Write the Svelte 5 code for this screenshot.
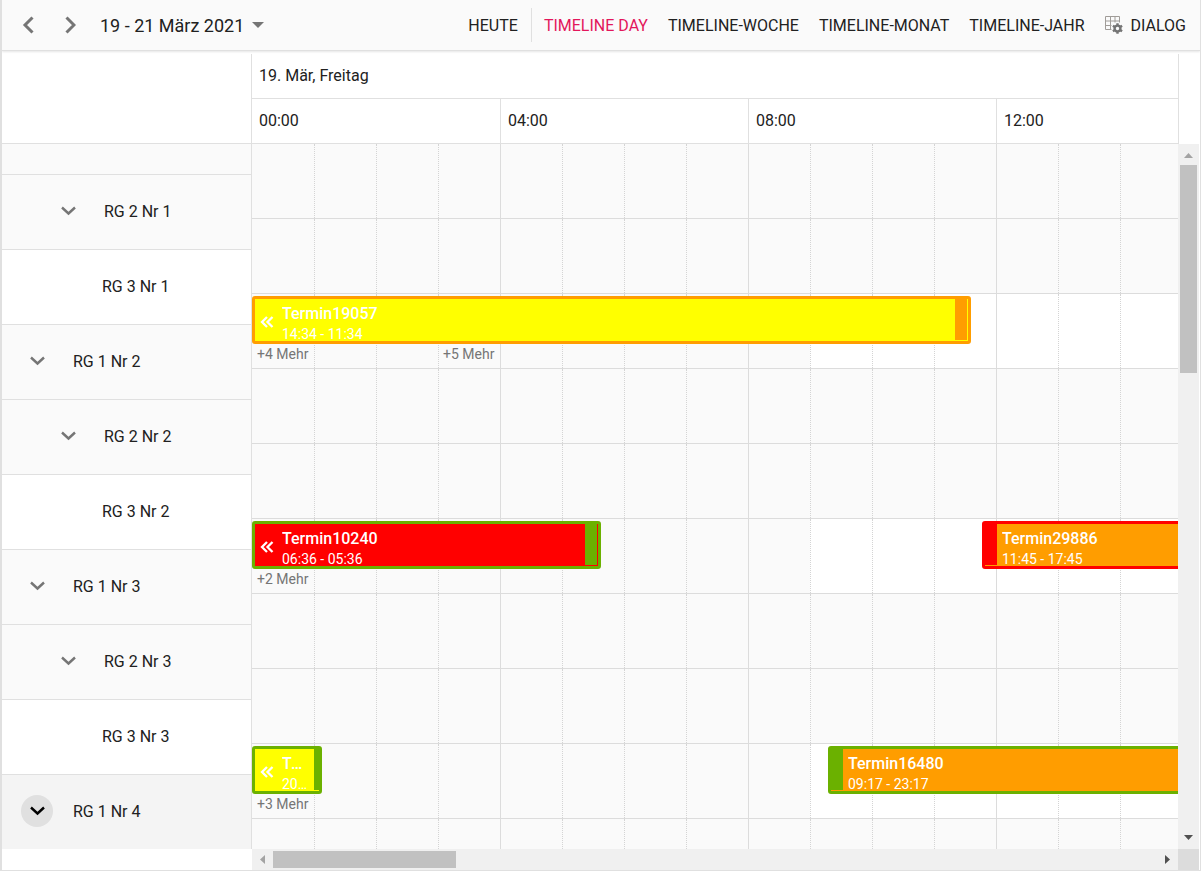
<script>
	const HOUR = 62;
	const hours = Array.from({ length: 24 }, (_, i) => i);
	const slots = ["00:00", "04:00", "08:00", "12:00", "16:00", "20:00"];
	const views = ["Timeline Day", "Timeline-Woche", "Timeline-Monat", "Timeline-Jahr"];

	const yellow = "#ffff00";
	const orange = "#ff9d00";
	const red = "#ff0000";
	const green = "#6bb100";

	const groups = [
		{
			nr: 1,
			events: [
				{ title: "Termin19057", time: "14:34 - 11:34", left: 0, width: 719, fill: yellow, edge: orange, before: true, gap: true }
			],
			more: [{ hour: 0, count: 4 }, { hour: 3, count: 5 }]
		},
		{
			nr: 2,
			events: [
				{ title: "Termin10240", time: "06:36 - 05:36", left: 0, width: 349, fill: red, edge: green, before: true, gap: true },
				{ title: "Termin29886", time: "11:45 - 17:45", left: 730, width: 372, fill: orange, edge: red }
			],
			more: [{ hour: 0, count: 2 }]
		},
		{
			nr: 3,
			events: [
				{ title: "Termin20114", time: "20:10 - 01:07", left: 0, width: 70, fill: yellow, edge: green, before: true, short: true },
				{ title: "Termin16480", time: "09:17 - 23:17", left: 576, width: 868, fill: orange, edge: green }
			],
			more: [{ hour: 0, count: 3 }]
		},
		{ nr: 4, events: [], more: [] }
	];

	// every group has two parent rows and one row that can hold events
	const rows = groups.flatMap((g) => [
		{ level: 1, nr: g.nr, events: [], more: [] },
		{ level: 2, nr: g.nr, events: [], more: [] },
		{ level: 3, nr: g.nr, events: g.events, more: g.more }
	]);

	let view = $state("Timeline Day");
	let hovered = $state("1-4");
</script>

{#snippet chevron()}
	<svg width="16" height="16" viewBox="0 0 16 16" aria-hidden="true">
		<path d="M2 4.500 8.500 10.500l6.500-6" fill="none" stroke="currentColor" stroke-width="2.400" />
	</svg>
{/snippet}

<main class="schedule">
	<header class="toolbar">
		<button class="nav" aria-label="Zurück">
			<svg width="12" height="18" viewBox="0 0 12 18"><path d="M10.500 1.500 3 9l7.500 7.500" fill="none" stroke="currentColor" stroke-width="3" /></svg>
		</button>
		<button class="nav" aria-label="Weiter">
			<svg width="12" height="18" viewBox="0 0 12 18"><path d="M2.500 1.500 10 9l-7.500 7.500" fill="none" stroke="currentColor" stroke-width="3" /></svg>
		</button>
		<button class="range">
			19 - 21 März 2021
			<svg width="12" height="6" viewBox="0 0 12 6" aria-hidden="true"><path d="M0 0h12L6 6z" fill="#757575" /></svg>
		</button>
		<div class="views">
			<button class="today">Heute</button>
			{#each views as v}
				<button class:active={view === v} onclick={() => (view = v)}>{v}</button>
			{/each}
			<button class="dialog">
				<svg width="18" height="18" viewBox="0 0 18 18" aria-hidden="true">
					<path d="M.5 .5h14v6M.5 .5v13h6M.5 5h14M.5 9.500h6M5.500 .5v13M10 .5v6" fill="none" stroke="#a09c98" />
					<circle cx="12.500" cy="12.500" r="2.900" fill="none" stroke="#757575" stroke-width="2.400" />
					<path d="M12.500 7.200v2.300M12.500 15.500v2.300M7.900 9.800l2 1.200M15.100 14l2 1.200M7.900 15.200l2-1.200M15.100 11l2-1.200" stroke="#757575" stroke-width="2.400" />
				</svg>
				Dialog
			</button>
		</div>
	</header>

	<div class="head">
		<div class="corner"></div>
		<div class="dates">
			<div class="day">19. Mär, Freitag</div>
			<div class="slots">
				{#each slots as slot}
					<div class="slot">{slot}</div>
				{/each}
			</div>
		</div>
	</div>

	<div class="body">
		<div class="resources">
			<div class="scrolled">
				{#each rows as row}
					<div
						class="resource level{row.level}"
						class:hover={hovered === `${row.level}-${row.nr}`}
					>
						{#if row.level < 3}
							<button class="toggle" aria-label="RG {row.level} Nr {row.nr} einklappen">{@render chevron()}</button>
						{/if}
						<span>RG {row.level} Nr {row.nr}</span>
					</div>
				{/each}
			</div>
		</div>

		<div class="timeline">
			{#each rows as row}
				<div class="row">
					{#each hours as h}
						<div class="cell" class:solid={h % 4 === 0} class:work={row.level === 3 && h >= 9 && h < 18}></div>
					{/each}
					{#each row.events as e}
						<div
							class="event"
							class:before={e.before}
							class:gap={e.gap}
							class:short={e.short}
							style="left: {e.left}px; width: {e.width}px; background: {e.fill}; border-color: {e.edge}"
						>
							{#if e.before}
								<svg class="prev" width="14" height="12" viewBox="0 0 14 12" aria-hidden="true">
									<path d="M7 1 2 6l5 5M12.500 1l-5 5 5 5" fill="none" stroke="#fff" stroke-width="2.300" />
								</svg>
							{/if}
							<div class="details">
								<div class="subject">{e.title}</div>
								<div class="time">{e.time}</div>
							</div>
							<div class="handle" style="background: {e.edge}"></div>
						</div>
					{/each}
					{#each row.more as m}
						<a class="more" href="#more" style="left: {m.hour * HOUR}px">+{m.count} Mehr</a>
					{/each}
				</div>
			{/each}
		</div>

		<div class="vbar">
			<svg width="21" height="21" viewBox="0 0 21 21" aria-hidden="true"><path d="M6 14h9l-4.500-5z" fill="#a3a3a3" /></svg>
			<div class="thumb"></div>
			<svg width="21" height="21" viewBox="0 0 21 21" aria-hidden="true"><path d="M6 7h9l-4.500 5z" fill="#505050" /></svg>
		</div>
	</div>

	<div class="foot">
		<div class="hbar">
			<svg width="21" height="21" viewBox="0 0 21 21" aria-hidden="true"><path d="M13 6v9l-5-4.500z" fill="#a3a3a3" /></svg>
			<div class="thumb"></div>
			<svg width="21" height="21" viewBox="0 0 21 21" aria-hidden="true"><path d="M8 6v9l5-4.500z" fill="#505050" /></svg>
		</div>
		<div class="knee"></div>
	</div>
</main>

<style>
	:global(body) {
		margin: 0;
		background: #fff;
	}

	.schedule {
		box-sizing: border-box;
		display: flex;
		flex-direction: column;
		height: calc(100vh - 4px);
		border: solid #e0e0e0;
		border-width: 0 1px 1px 2px;
		font-family: Roboto, sans-serif;
		font-size: 16px;
		color: #212121;
		overflow: hidden;
	}

	button {
		padding: 0;
		border: 0;
		background: none;
		font: inherit;
		color: inherit;
		cursor: pointer;
	}

	svg {
		display: block;
		flex: none;
	}

	.toolbar {
		display: flex;
		align-items: center;
		height: 50px;
		flex: none;
		background: #fafafa;
		border-bottom: 1px solid #e0e0e0;
		box-shadow: 0 1px 2px rgba(0, 0, 0, 0.1);
	}

	.nav {
		width: 42px;
		height: 42px;
		padding-left: 20px;
		color: #757575;
	}

	.range {
		display: flex;
		align-items: center;
		gap: 8px;
		margin-left: 14px;
		font-size: 18px;
	}

	.views {
		display: flex;
		align-items: center;
		gap: 20px;
		margin-left: auto;
		padding-right: 14px;
	}

	.views button {
		text-transform: uppercase;
		white-space: nowrap;
	}

	.views .today {
		height: 34px;
		margin-right: -8px;
		padding-right: 13px;
		border-right: 1px solid #e0e0e0;
	}

	.views .active {
		color: #e3165b;
	}

	.dialog {
		display: flex;
		align-items: center;
		gap: 8px;
	}

	.head {
		display: flex;
		flex: none;
		padding: 3px 21px 0 0;
	}

	.corner {
		box-sizing: border-box;
		flex: none;
		width: 250px;
		border: solid #e0e0e0;
		border-width: 0 1px 1px 0;
	}

	.dates {
		flex: 1;
		min-width: 0;
		border-right: 1px solid #e0e0e0;
		overflow: hidden;
	}

	.day,
	.slots {
		height: 44px;
		line-height: 43px;
		border-bottom: 1px solid #e0e0e0;
	}

	.day {
		padding-left: 7px;
	}

	.slots {
		display: flex;
	}

	.slot {
		box-sizing: border-box;
		flex: none;
		width: 248px;
		padding-left: 7px;
	}

	.slot + .slot {
		border-left: 1px solid #e0e0e0;
	}

	.body {
		display: flex;
		flex: 1;
		min-height: 0;
		padding-right: 1px;
	}

	.resources {
		box-sizing: border-box;
		flex: none;
		width: 250px;
		border-right: 1px solid #e0e0e0;
		overflow: hidden;
	}

	.scrolled {
		margin-top: -44px;
	}

	.resource {
		box-sizing: border-box;
		display: flex;
		align-items: center;
		gap: 20px;
		height: 75px;
		padding-bottom: 2px;
		border-bottom: 1px solid #e0e0e0;
		background: #fafafa;
	}

	.level1 {
		padding-left: 19px;
	}

	.level2 {
		padding-left: 50px;
	}

	.level3 {
		padding-left: 100px;
		background: #fff;
	}

	.hover {
		background: #f4f4f4;
	}

	.toggle {
		display: grid;
		place-items: center;
		width: 32px;
		height: 32px;
		border-radius: 50%;
		color: #757575;
	}

	.hover .toggle {
		background: #e0e0e0;
		color: #000;
	}

	.timeline {
		flex: 1;
		min-width: 0;
		overflow: hidden;
	}

	.row {
		box-sizing: border-box;
		position: relative;
		display: flex;
		height: 75px;
		border-bottom: 1px solid #dcdcdc;
	}

	.cell {
		box-sizing: border-box;
		flex: none;
		width: 62px;
		border-left: 1px dotted #d4d4d4;
		background: #fafafa;
	}

	.cell.solid {
		border-left: 1px solid #dcdcdc;
	}

	.cell:first-child {
		border-left: 0;
	}

	.cell.work {
		background: #fff;
	}

	.event {
		box-sizing: border-box;
		position: absolute;
		top: 2px;
		display: flex;
		height: 48px;
		padding-left: 17px;
		border: 3px solid;
		border-radius: 3px;
		color: #fff;
		overflow: hidden;
	}

	.event.before {
		gap: 8px;
		padding-left: 5px;
		padding-right: 14px;
	}

	.event.short {
		padding-right: 9px;
	}

	.prev {
		margin-top: 17px;
	}

	.details {
		min-width: 0;
		padding-top: 4px;
	}

	.subject,
	.time {
		overflow: hidden;
		text-overflow: ellipsis;
		white-space: nowrap;
	}

	.subject {
		font-weight: 500;
		line-height: 22px;
	}

	.time {
		font-size: 14px;
		line-height: 18px;
	}

	.handle {
		position: absolute;
		top: 0;
		bottom: 1px;
		left: 0;
		width: 12px;
	}

	.before .handle {
		left: auto;
		right: 0;
	}

	.gap .handle {
		right: 1px;
	}

	.short .handle {
		width: 5px;
	}

	.more {
		position: absolute;
		top: 52px;
		padding-left: 5px;
		font-size: 14px;
		line-height: 16px;
		color: #757575;
		text-decoration: none;
	}

	.vbar {
		display: flex;
		flex-direction: column;
		width: 21px;
		background: #f0f0f0;
	}

	.vbar .thumb {
		height: 31%;
		max-height: 208px;
		margin: 0 2px auto;
	}

	.thumb {
		background: #c1c1c1;
	}

	.foot {
		display: flex;
		flex: none;
		height: 21px;
		padding: 0 1px 0 250px;
	}

	.hbar {
		display: flex;
		flex: 1;
		background: #f0f0f0;
	}

	.hbar .thumb {
		width: 20%;
		max-width: 183px;
		margin: 2px auto 2px 0;
	}

	.knee {
		width: 21px;
		background: #dcdcdc;
	}
</style>
